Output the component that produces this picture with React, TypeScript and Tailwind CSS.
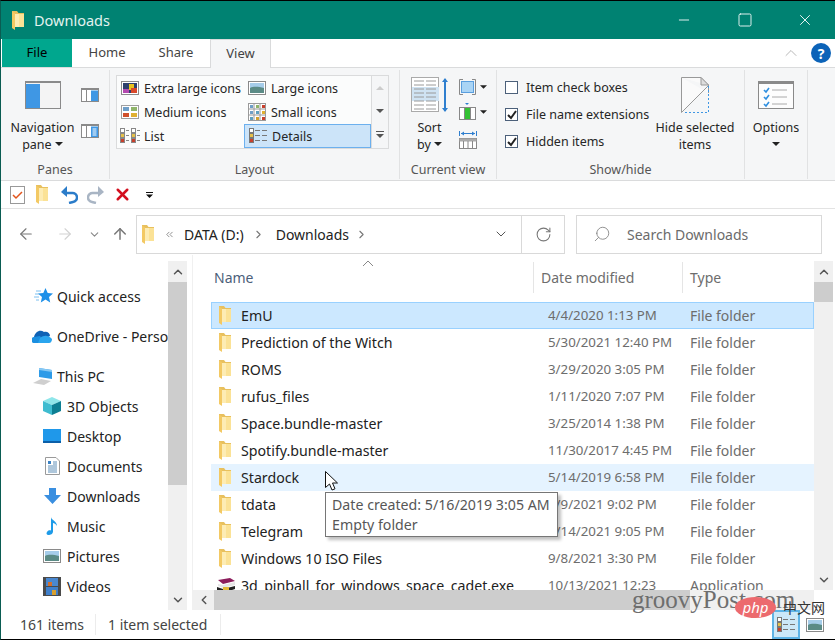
import { ArrowLeft, ArrowRight, ArrowUp, ChevronDown, ChevronLeft, ChevronRight, ChevronUp, ChevronsLeft, Minus, RotateCw, Search, Square, X } from "lucide-react";

const Folder = ({ className = "" }: { className?: string }) => (
  <svg viewBox="0 0 12 19" className={`h-[19px] w-3 shrink-0 ${className}`}>
    <path d="M0 0h5l1.500 2H12v14H0z" fill="#e8c05e" />
    <path d="M2.500 3H12v13H2.500z" fill="#fbe296" />
    <path d="M2.500 3H7v13H2.500z" fill="#fdecb4" />
    <path d="M0 .500l3 2V19l-3-2z" fill="#f3c964" />
  </svg>
);

const Caret = ({ className = "" }: { className?: string }) => (
  <svg viewBox="0 0 8 4" className={`inline-block h-1 w-2 ${className}`}>
    <path d="M0 0h8L4 4z" fill="#222" />
  </svg>
);

const Thumbs = ({ kind }: { kind: string }) => {
  if (kind === "xl")
    return (
      <svg viewBox="0 0 18 14" className="h-[14px] w-[18px]">
        <rect x=".5" y=".5" width="17" height="13" fill="#fff" stroke="#8a8a8a" />
        <rect x="2" y="2" width="14" height="10" fill="#2d3f6c" />
        <path d="M2 8h6v4H2z" fill="#b44ab0" />
        <path d="M8 3h5v6H8z" fill="#e8c11e" />
        <path d="M10 7h6v5h-6z" fill="#d8482a" />
      </svg>
    );
  if (kind === "lg")
    return (
      <svg viewBox="0 0 18 14" className="h-[14px] w-[18px]">
        <rect x=".5" y=".5" width="17" height="13" fill="#fff" stroke="#8a8a8a" />
        <rect x="2" y="2" width="14" height="5" fill="#a6cdea" />
        <path d="M2 7c4-2 9-1 14 0v5H2z" fill="#5b8b86" />
      </svg>
    );
  if (kind === "md")
    return (
      <svg viewBox="0 0 18 14" className="h-[14px] w-[18px]">
        <rect x=".5" y=".5" width="17" height="13" fill="#fff" stroke="#a0a0a0" />
        <rect x="2" y="2" width="6" height="4" fill="#6f9fc8" />
        <rect x="10" y="2" width="6" height="4" fill="#8fb56a" />
        <rect x="2" y="8" width="6" height="4" fill="#d0502c" />
        <rect x="10" y="8" width="6" height="4" fill="#e0b030" />
      </svg>
    );
  if (kind === "sm")
    return (
      <svg viewBox="0 0 18 18" className="h-[18px] w-[18px]">
        <rect x=".5" y=".5" width="17" height="17" fill="#fff" stroke="#9a9a9a" />
        <path d="M6 0v18M12 0v18M0 6h18M0 12h18" stroke="#9a9a9a" />
        <rect x="2" y="2" width="3" height="3" fill="#6f9fc8" />
        <rect x="8" y="2" width="3" height="3" fill="#8fb56a" />
        <rect x="14" y="2" width="3" height="3" fill="#c8402c" />
        <rect x="2" y="8" width="3" height="3" fill="#6f9fc8" />
        <rect x="8" y="8" width="3" height="3" fill="#5da0c0" />
        <rect x="14" y="8" width="3" height="3" fill="#e0b030" />
        <rect x="2" y="14" width="3" height="3" fill="#5da0c0" />
        <rect x="8" y="14" width="3" height="3" fill="#d0a030" />
        <rect x="14" y="14" width="3" height="3" fill="#c8402c" />
      </svg>
    );
  if (kind === "list")
    return (
      <svg viewBox="0 0 20 16" className="h-4 w-5">
        {[0, 11].map((x) => (
          <g key={x} transform={`translate(${x} 0)`}>
            <rect x=".5" y=".5" width="4" height="4" fill="#fff" stroke="#888" />
            <rect x=".5" y="5.5" width="4" height="4" fill="#e4c04a" stroke="#888" />
            <rect x=".5" y="10.5" width="4" height="4" fill="#c8402c" stroke="#888" />
            <path d="M6 2.5h3M6 7.5h3M6 12.5h3" stroke="#888" />
          </g>
        ))}
      </svg>
    );
  return (
    <svg viewBox="0 0 18 16" className="h-4 w-[18px]">
      <rect x=".5" y=".5" width="4" height="4" fill="#fff" stroke="#777" />
      <rect x=".5" y="5.5" width="4" height="4" fill="#e4c04a" stroke="#777" />
      <rect x=".5" y="10.5" width="4" height="4" fill="#c8402c" stroke="#777" />
      <path d="M6 2.5h5M13 2.5h5M6 7.5h5M13 7.5h5M6 12.5h5M13 12.5h5" stroke="#777" />
    </svg>
  );
};

const PaneIcon = ({ side }: { side: "right" | "details" }) => (
  <svg viewBox="0 0 18 14" className="h-[14px] w-[18px]">
    <rect x=".5" y=".5" width="17" height="13" fill="#fff" stroke="#8a8a8a" />
    <rect x="0" y="0" width="18" height="2" fill="#8a8a8a" />
    <path d="M5.5 2v12" stroke="#8a8a8a" />
    <rect x="10" y="2.5" width="7" height="10.5" fill="#3f97e4" />
    {side === "details" && <path d="M11.5 5h4M11.5 7h4M11.5 9h4M11.5 11h4" stroke="#fff" />}
  </svg>
);

const galleryRows = [
  [
    { kind: "xl", label: "Extra large icons" },
    { kind: "lg", label: "Large icons" },
  ],
  [
    { kind: "md", label: "Medium icons" },
    { kind: "sm", label: "Small icons" },
  ],
  [
    { kind: "list", label: "List" },
    { kind: "details", label: "Details" },
  ],
];

const files = [
  ["EmU", "4/4/2020 1:13 PM", "File folder"],
  ["Prediction of the Witch", "5/30/2021 12:40 PM", "File folder"],
  ["ROMS", "3/29/2020 3:05 PM", "File folder"],
  ["rufus_files", "1/11/2020 7:07 PM", "File folder"],
  ["Space.bundle-master", "3/25/2014 1:38 PM", "File folder"],
  ["Spotify.bundle-master", "11/30/2017 4:45 PM", "File folder"],
  ["Stardock", "5/14/2019 6:58 PM", "File folder"],
  ["tdata", "9/9/2021 9:02 PM", "File folder"],
  ["Telegram", "9/14/2021 9:05 PM", "File folder"],
  ["Windows 10 ISO Files", "9/8/2021 3:30 PM", "File folder"],
  ["3d_pinball_for_windows_space_cadet.exe", "10/13/2021 12:23", "Application"],
];

const TreeIcon = ({ name }: { name: string }) => {
  switch (name) {
    case "Quick access":
      return (
        <svg viewBox="0 0 19 16" className="h-4 w-[19px] shrink-0">
          <path d="M11.500 0l2.200 5 5.300.5-4 3.500 1.200 5.500-4.700-2.900-4.700 2.900L8 9 4 5.500 9.300 5z" fill="#1e90e8" />
          <path d="M2 3h5M1 6h4M0 9h5M2 12h3" stroke="#7cc0f0" />
        </svg>
      );
    case "OneDrive - Personal":
      return (
        <svg viewBox="0 0 20 13" className="h-[13px] w-5 shrink-0">
          <path d="M2 7C3 2 8-1 12 2c3-1 6 1 6 4l-8 4z" fill="#0f62b5" />
          <path d="M3 13a3 3 0 0 1-1-6l6-1 5 7z" fill="#1b8fe0" />
          <path d="M8 8c4-3 8-3 12 1 0 2-1 4-3 4H6z" fill="#2aa5ee" />
        </svg>
      );
    case "This PC":
      return (
        <svg viewBox="0 0 20 17" className="h-[17px] w-5 shrink-0">
          <path d="M6 0l13 2v9L6 9z" fill="#2e9be8" />
          <path d="M6 0l13 2v2L6 2z" fill="#88c9f4" />
          <path d="M0 15l8-4 10 2-7 4z" fill="#cfcfcf" />
        </svg>
      );
    case "3D Objects":
      return (
        <svg viewBox="0 0 18 18" className="h-[18px] w-[18px] shrink-0">
          <path d="M9 0l9 4-9 4-9-4z" fill="#8fe6ea" />
          <path d="M0 4l9 4v10l-9-4z" fill="#3ebcd0" />
          <path d="M18 4L9 8v10l9-4z" fill="#0d7f93" />
        </svg>
      );
    case "Desktop":
      return (
        <svg viewBox="0 0 18 14" className="h-[14px] w-[18px] shrink-0">
          <rect width="18" height="13" fill="#1f98ea" />
          <rect y="12" width="18" height="2" fill="#0b5fa8" />
        </svg>
      );
    case "Documents":
      return (
        <svg viewBox="0 0 15 18" className="h-[18px] w-[15px] shrink-0">
          <path d="M.5.500H11L14.500 4v13.500H.500z" fill="#fff" stroke="#9a9a9a" />
          <path d="M3 4h3v3H3z" fill="#3b82c4" />
          <path d="M8 5h4M8 7h4M3 9h9M3 11h9M3 13h9M3 15h9" stroke="#5e8fb8" />
        </svg>
      );
    case "Downloads":
      return (
        <svg viewBox="0 0 17 16" className="h-4 w-[17px] shrink-0">
          <path d="M5 0h7v7h5l-8.500 9L0 7h5z" fill="#3a8fe0" />
        </svg>
      );
    case "Music":
      return (
        <svg viewBox="0 0 12 18" className="h-[18px] w-3 shrink-0">
          <path d="M5 0c0 3 6 4 6 9-1-2-3-3-4-3v8.500C7 17 4.500 18 2.500 18S0 16.500 1 15s2-2 4-1.500z" fill="#1e9be8" />
        </svg>
      );
    case "Pictures":
      return <Thumbs kind="lg" />;
    default:
      return (
        <svg viewBox="0 0 18 19" className="h-[19px] w-[18px] shrink-0">
          <rect width="18" height="19" fill="#4a4a4a" />
          <rect x="3" y="1" width="12" height="8" fill="#4a88d0" />
          <rect x="3" y="10" width="12" height="8" fill="#3f80cc" />
          <path d="M5 5h4v4H5z" fill="#d07030" />
          <path d="M9 13h4v5H9z" fill="#d8a030" />
        </svg>
      );
  }
};

const tree = [
  { name: "Quick access", box: "pl-[33px] gap-[4px]" },
  { name: "OneDrive - Personal", box: "mt-[10px] pl-[31px] gap-[5px]" },
  { name: "This PC", box: "mt-[10px] pl-[32px] gap-[4px]" },
  { name: "3D Objects", box: "pl-[42px] gap-[6px]" },
  { name: "Desktop", box: "pl-[42px] gap-[6px]" },
  { name: "Documents", box: "pl-[44px] gap-[7px]" },
  { name: "Downloads", box: "pl-[43px] gap-[6px]" },
  { name: "Music", box: "pl-[45px] gap-[9px]" },
  { name: "Pictures", box: "pl-[42px] gap-[6px]" },
  { name: "Videos", box: "pl-[42px] gap-[6px]" },
];

export default function App() {
  return (
    <div className="relative flex h-[640px] w-[835px] flex-col overflow-hidden border-t border-b border-l border-t-black border-b-black border-l-[#0a5c52] bg-white font-['Noto_Sans',sans-serif] text-[13px] text-[#222]">
      {/* title bar */}
      <div className="flex h-[38px] shrink-0 items-center bg-[#008272] pl-[11px] text-white">
        <Folder />
        <span className="ml-[10px] pt-[1px] text-[14.500px] text-[#e3f2ef]">Downloads</span>
        <div className="ml-auto flex items-center pr-[21px]">
          <Minus className="mr-[45px] h-4 w-4" strokeWidth={1.300} />
          <Square className="mr-[43px] h-4 w-4" strokeWidth={1.300} />
          <X className="h-[18px] w-[18px]" strokeWidth={1.200} />
        </div>
      </div>

      {/* tabs */}
      <div className="flex h-[28px] shrink-0 items-stretch">
        <div className="ml-[1px] flex w-[70px] items-center justify-center bg-[#00a78e] text-black">File</div>
        <div className="flex w-[70px] items-center justify-center text-[#444]">Home</div>
        <div className="flex w-[68px] items-center justify-center text-[#444]">Share</div>
        <div className="z-10 -mb-px flex w-[61px] items-center justify-center border-x border-t border-[#d9dadb] bg-[#f5f6f7] text-[#444]">View</div>
        <div className="ml-auto flex items-center gap-[10px] pr-[4px]">
          <ChevronUp className="h-5 w-5 text-[#aaa]" strokeWidth={1} />
          <div className="flex h-5 w-5 items-center justify-center rounded-full bg-[#0c63b8] text-[14px] font-bold text-white">?</div>
        </div>
      </div>

      {/* ribbon */}
      <div className="flex h-[114px] shrink-0 border-y border-[#dadbdc] bg-[#f5f6f7] text-[12.500px] leading-[17px] text-[#262626]">
        <RibbonGroup label="Panes" width="w-[109px]">
          <div className="flex h-full">
            <div className="ml-[9px] flex w-[65px] flex-col items-center pt-[11px]">
              <svg viewBox="0 0 36 28" className="h-7 w-9">
                <rect x=".5" y=".5" width="35" height="27" fill="#f4f4f4" stroke="#8a8a8a" />
                <rect y="0" width="36" height="2" fill="#8a8a8a" />
                <rect x="1" y="3" width="14" height="24" fill="#3f97e4" />
              </svg>
              <div className="mt-[10px] text-center">Navigation</div>
              <div>pane <Caret className="mb-[3px]" /></div>
            </div>
            <div className="ml-[6px] flex flex-col gap-[22px] pt-[18px]">
              <PaneIcon side="right" />
              <PaneIcon side="details" />
            </div>
          </div>
        </RibbonGroup>

        <RibbonGroup label="Layout" width="w-[290px]">
          <div className="ml-[6px] mt-[5px] flex">
            <div className="w-[256px] border border-[#dadbdc] bg-[#fbfcfc]">
              {galleryRows.map((row) => (
                <div key={row[0].label} className="grid h-[24px] grid-cols-2">
                  {row.map((g) => (
                    <div
                      key={g.label}
                      className={`flex items-center ${g.kind === "details" ? "border border-[#6cb0ee] bg-[#cce4f9]" : ""}`}
                    >
                      <span className="flex w-[27px] shrink-0 justify-center pr-[2px]">
                        <Thumbs kind={g.kind} />
                      </span>
                      <span className="whitespace-nowrap">{g.label}</span>
                    </div>
                  ))}
                </div>
              ))}
            </div>
            <div className="flex w-[17px] flex-col items-center justify-between border-y border-r border-[#dadbdc] py-[10px]">
              <svg viewBox="0 0 8 4" className="h-1 w-2"><path d="M0 4h8L4 0z" fill="#ccc" /></svg>
              <svg viewBox="0 0 8 4" className="h-1 w-2"><path d="M0 0h8L4 4z" fill="#555" /></svg>
              <svg viewBox="0 0 8 7" className="h-[7px] w-2"><path d="M0 0h8v1H0zM0 3h8L4 7z" fill="#555" /></svg>
            </div>
          </div>
        </RibbonGroup>

        <RibbonGroup label="Current view" width="w-[97px]">
          <div className="flex">
            <div className="flex w-[56px] flex-col items-center pl-[3px] pt-[7px]">
              <svg viewBox="0 0 38 36" className="h-9 w-[38px]">
                <rect x=".5" y=".5" width="27" height="34" fill="#fff" stroke="#aaa" />
                <rect x="1" y="10" width="27" height="14" fill="#cfe3f3" />
                <path d="M3 4h10M15 4h10M3 8h10M15 8h10M3 12h10M15 12h10M3 16h10M15 16h10M3 20h10M15 20h10M3 24h10M15 24h10M3 28h10M15 28h10M3 32h10M15 32h10" stroke="#9a9a9a" />
                <path d="M34 2v32" stroke="#2f7fcf" strokeWidth="2" />
                <path d="M31 5l3-4 3 4zM31 31l3 4 3-4z" fill="#2f7fcf" />
              </svg>
              <div className="mt-[6px]">Sort</div>
              <div>by <Caret className="mb-[3px]" /></div>
            </div>
            <div className="ml-[3px] flex flex-col pt-[8px]">
              <div className="flex h-[17px] items-center gap-[4px]">
                <svg viewBox="0 0 17 16" className="h-4 w-[17px]">
                  <path d="M4 .500H.500v15H4M13 .500h3.500v15H13" fill="none" stroke="#888" />
                  <rect x="2.500" y="2.500" width="12" height="11" fill="#a9d4f5" stroke="#5a9ede" />
                </svg>
                <Caret className="w-[7px]" />
              </div>
              <div className="mt-[8px] flex h-[18px] items-center gap-[4px]">
                <svg viewBox="0 0 17 18" className="h-[18px] w-[17px]">
                  <path d="M6 0h4L8 2z" fill="#2f7fcf" />
                  <rect x=".5" y="4.500" width="16" height="12" fill="#fff" stroke="#888" />
                  <path d="M5.500 4v13M11.500 4v13" stroke="#888" />
                  <rect x="6" y="5" width="5" height="11" fill="#35c235" />
                </svg>
                <Caret className="w-[7px]" />
              </div>
              <div className="mt-[10px]">
                <svg viewBox="0 0 18 18" className="h-[18px] w-[18px]">
                  <path d="M.500 0v5M17.500 0v5" stroke="#2f7fcf" />
                  <path d="M2 2.500h14" stroke="#2f7fcf" />
                  <path d="M2 2.500l3-2v4zM16 2.500l-3-2v4z" fill="#2f7fcf" />
                  <rect x=".5" y="7.500" width="17" height="10" fill="#fff" stroke="#888" />
                  <rect x=".5" y="7.500" width="17" height="3" fill="#aaa" />
                  <path d="M4.500 10v8M9 10v8M13.500 10v8" stroke="#888" />
                </svg>
              </div>
            </div>
          </div>
        </RibbonGroup>

        <RibbonGroup label="Show/hide" width="w-[248px]">
          <div className="flex">
            <div className="ml-[8px] flex w-[150px] flex-col gap-[10px] pt-[9px]">
              <Check label="Item check boxes" />
              <Check label="File name extensions" checked />
              <Check label="Hidden items" checked />
            </div>
            <div className="-ml-[2px] flex w-[84px] flex-col items-center pt-[7px]">
              <svg viewBox="0 0 28 36" className="h-9 w-7">
                <path d="M.500.500H20l7.500 7.500v8M.500.500v35l27-27" fill="#fafafa" stroke="#999" />
                <path d="M20 .500V8h7.500z" fill="#ddd" stroke="#999" />
                <path d="M27.500 9v26.500H2" fill="none" stroke="#3f97e4" strokeDasharray="2 2" />
              </svg>
              <div className="mt-[6px] whitespace-nowrap text-center">Hide selected</div>
              <div>items</div>
            </div>
          </div>
        </RibbonGroup>

        <RibbonGroup label="" width="w-[63px]">
          <div className="flex flex-col items-center pt-[11px]">
            <svg viewBox="0 0 36 28" className="h-7 w-9">
              <rect x=".5" y=".5" width="35" height="27" fill="#fdfdfd" stroke="#8a8a8a" />
              <rect width="36" height="3" fill="#8a8a8a" />
              <path d="M6 9l2 2 3-4M6 16l2 2 3-4M6 23l2 2 3-4" fill="none" stroke="#2f8fe0" strokeWidth="1.600" />
              <path d="M14 9h15M14 16h15M14 23h15" stroke="#aaa" />
            </svg>
            <div className="mt-[10px]">Options</div>
            <Caret className="mt-[6px]" />
          </div>
        </RibbonGroup>
      </div>

      {/* quick access toolbar */}
      <div className="flex h-[28px] shrink-0 items-center border-b border-[#e3e3e3] pl-[9px]">
        <svg viewBox="0 0 15 18" className="h-[18px] w-[15px]">
          <rect x=".5" y=".5" width="14" height="17" fill="#fff" stroke="#999" />
          <path d="M3 9l3 3 6-6" fill="none" stroke="#e2541c" strokeWidth="1.500" />
        </svg>
        <Folder className="ml-[11px]" />
        <svg viewBox="0 0 17 18" className="ml-[13px] h-[18px] w-[17px]">
          <path d="M5 7h6a4.500 4.500 0 0 1 1 9l-4 1" fill="none" stroke="#2b7cc9" strokeWidth="2.500" />
          <path d="M0 6l6-6v11z" fill="#2b7cc9" />
        </svg>
        <svg viewBox="0 0 17 18" className="ml-[9px] h-[18px] w-[17px]">
          <path d="M12 7H6a4.500 4.500 0 0 0-1 9l4 1" fill="none" stroke="#a9b5c4" strokeWidth="2.500" />
          <path d="M17 6l-6-6v11z" fill="#a9b5c4" />
        </svg>
        <X className="ml-[9px] h-[19px] w-[19px] text-[#d3101f]" strokeWidth={3.200} />
        <svg viewBox="0 0 7 6" className="ml-[14px] h-[6px] w-[7px]">
          <path d="M0 0h7v1H0zM0 2.500h7L3.500 6z" fill="#111" />
        </svg>
      </div>

      {/* nav bar */}
      <div className="flex h-[46px] shrink-0 items-center pt-[4px]">
        <ArrowLeft className="ml-[16px] h-[18px] w-[18px] text-[#777]" strokeWidth={1.500} />
        <ArrowRight className="ml-[21px] h-[18px] w-[18px] text-[#d2d2d2]" strokeWidth={1.500} />
        <ChevronDown className="ml-[14px] h-[13px] w-[13px] text-[#888]" strokeWidth={2} />
        <ArrowUp className="ml-[10px] h-[18px] w-[18px] text-[#777]" strokeWidth={2} />
        <div className="ml-[7px] flex h-[39px] w-[429px] items-center border border-[#d9d9d9] pl-[5px] text-[14px]">
          <Folder />
          <ChevronsLeft className="ml-[10px] h-[11px] w-[11px] text-[#888]" />
          <span className="ml-[9px]">DATA (D:)</span>
          <ChevronRight className="ml-[8px] h-[13px] w-[13px] text-[#777]" />
          <span className="ml-[11px]">Downloads</span>
          <ChevronRight className="ml-[6px] h-[13px] w-[13px] text-[#777]" />
          <ChevronDown className="ml-[125px] h-4 w-4 text-[#555]" strokeWidth={1.500} />
          <div className="ml-[12px] flex h-full flex-1 items-center justify-center border-l border-[#d9d9d9]">
            <RotateCw className="h-[17px] w-[17px] text-[#777]" strokeWidth={1.500} />
          </div>
        </div>
        <div className="ml-[11px] flex h-[39px] w-[246px] items-center border border-[#d9d9d9] pl-[16px] text-[14px] text-[#6b6b6b]">
          <Search className="h-[18px] w-[18px] -scale-x-100 text-[#888]" strokeWidth={1.200} />
          <span className="ml-[16px]">Search Downloads</span>
        </div>
      </div>

      {/* main */}
      <div className="flex min-h-0 flex-1 text-[14px]">
        <div className="flex w-[187px] shrink-0">
          <div className="w-[167px] overflow-hidden pt-[26px]">
            {tree.map((t) => (
              <div key={t.name} className={`flex h-[30px] items-center whitespace-nowrap ${t.box}`}>
                <TreeIcon name={t.name} />
                <span>{t.name}</span>
              </div>
            ))}
          </div>
          <div className="mt-[6px] flex w-[19px] flex-col bg-[#f0f0f0]">
            <div className="flex h-[21px] items-center justify-center">
              <ChevronUp className="h-[14px] w-[14px] text-[#555]" strokeWidth={2.500} />
            </div>
            <div className="h-[203px] bg-[#cdcdcd]" />
            <div className="mt-auto flex h-[21px] items-center justify-center">
              <ChevronDown className="h-[14px] w-[14px] text-[#555]" strokeWidth={2.500} />
            </div>
          </div>
        </div>

        <div className="ml-[4px] flex min-w-0 flex-1 border-l border-[#f0f0f0]">
          <div className="flex w-[621px] shrink-0 flex-col">
            <div className="relative flex h-[47px] shrink-0 pt-[6px] pl-[21px] text-[#4c607a]">
              <svg viewBox="0 0 10 5" className="absolute left-[170px] top-[6px] h-[5px] w-[10px]">
                <path d="M0 5l5-5 5 5" fill="none" stroke="#888" />
              </svg>
              <div className="mt-[1px] flex h-[31px] w-[320px] items-center border-r border-[#e5e5e5]">Name</div>
              <div className="mt-[1px] flex h-[31px] w-[149px] items-center border-r border-[#e5e5e5] pl-[7px] text-[#6d6d6d]">Date modified</div>
              <div className="mt-[1px] flex h-[31px] items-center pl-[7px] text-[#6d6d6d]">Type</div>
            </div>
            <div className="min-h-0 flex-1 overflow-hidden pl-[18px]">
              {files.map((f, i) => (
                <div
                  key={f[0]}
                  className={`flex h-[27px] items-center border whitespace-nowrap ${
                    i === 0 ? "border-[#99d1ff] bg-[#cce8ff]" : i === 6 ? "border-[#e5f3ff] bg-[#e5f3ff]" : "border-transparent"
                  }`}
                >
                  <span className="flex w-[29px] shrink-0 pl-[7px]">
                    {i === 10 ? (
                      <svg viewBox="0 0 20 16" className="-ml-[3px] h-4 w-5 shrink-0">
                        <path d="M2 2l12-2 5 3-12 3z" fill="#8c1d5c" />
                        <path d="M2 6l5 1 12-3v3L7 10 2 8z" fill="#e6e6e6" />
                        <path d="M1 9l6 2 12-3v3L7 15l-6-2z" fill="#222" />
                        <rect x="7" y="9" width="6" height="6" fill="#e2b83a" />
                      </svg>
                    ) : (
                      <Folder />
                    )}
                  </span>
                  <span className="w-[307px] shrink-0 text-[14.200px]">{f[0]}</span>
                  <span className="w-[142px] shrink-0 text-[13.300px] text-[#6d6d6d]">{f[1]}</span>
                  <span className="text-[#6d6d6d]">{f[2]}</span>
                </div>
              ))}
            </div>
            <div className="flex h-[20px] shrink-0 bg-[#f0f0f0]">
              <div className="flex w-[21px] items-center justify-center">
                <ChevronLeft className="h-[14px] w-[14px] text-[#555]" strokeWidth={2.500} />
              </div>
              <div className="w-[476px] bg-[#cdcdcd]" />
            </div>
          </div>
          <div className="mt-[6px] mb-[20px] flex w-[19px] shrink-0 flex-col bg-[#f0f0f0]">
            <div className="flex h-[21px] items-center justify-center">
              <ChevronUp className="h-[14px] w-[14px] text-[#555]" strokeWidth={2.500} />
            </div>
            <div className="h-[20px] bg-[#cdcdcd]" />
            <div className="mt-auto flex h-[21px] items-center justify-center">
              <ChevronDown className="h-[14px] w-[14px] text-[#555]" strokeWidth={2.500} />
            </div>
          </div>
        </div>
      </div>

      {/* status bar */}
      <div className="flex h-[29px] shrink-0 items-center pl-[19px] text-[14px] text-[#444]">
        <span className="w-[76px] border-r border-[#ececec]">161 items</span>
        <span className="ml-[12px] w-[113px] border-r border-[#ececec] whitespace-nowrap">1 item selected</span>
        <div className="ml-auto mr-[11px] flex items-center">
          <div className="flex h-[29px] w-[28px] items-center justify-center border-2 border-[#5fb4e6] bg-[#cce8f8]">
            <Thumbs kind="details" />
          </div>
          <span className="ml-[6px] flex"><Thumbs kind="lg" /></span>
        </div>
      </div>

      {/* tooltip */}
      <div className="absolute left-[324px] top-[491px] flex h-[45px] w-[233px] flex-col justify-center border border-[#767676] bg-white pl-[6px] text-[14.200px] leading-[20px] text-[#575757] shadow-[3px_3px_3px_rgba(0,0,0,0.25)]">
        <div className="whitespace-nowrap">Date created: 5/16/2019 3:05 AM</div>
        <div>Empty folder</div>
      </div>

      {/* mouse pointer */}
      <svg viewBox="0 0 13 21" className="absolute left-[324px] top-[470px] h-[21px] w-[13px]">
        <path d="M.500.500v16l4-3.500 2.500 6 3-1.200-2.500-5.800h5z" fill="#fff" stroke="#111" />
      </svg>

      {/* watermark */}
      <div className="pointer-events-none absolute left-[631px] top-[580px] font-['Liberation_Serif',serif] text-[25px] text-[#6e6e6e]">groovyPost.com</div>
      <div className="absolute left-[734px] top-[596px] flex h-[21px] w-[41px] items-center justify-center rounded-[50%] bg-[#ec6a6e] text-[15px] italic text-white">php</div>
      <div className="absolute left-[782px] top-[596px] font-['Noto_Sans_CJK_SC',sans-serif] text-[14px] text-[#333]">中文网</div>
    </div>
  );
}

function RibbonGroup({ label, width, children }: { label: string; width: string; children: React.ReactNode }) {
  return (
    <div className={`relative mt-[2px] mb-[1px] flex shrink-0 flex-col border-r border-[#e1e2e3] ${width}`}>
      <div className="min-h-0 flex-1">{children}</div>
      {label && <div className="h-[19px] text-center text-[12.500px] leading-[19px] text-[#555]">{label}</div>}
    </div>
  );
}

function Check({ label, checked }: { label: string; checked?: boolean }) {
  return (
    <div className="flex h-[17px] items-center whitespace-nowrap">
      <span className="flex h-[13px] w-[13px] shrink-0 items-center justify-center border border-[#4c607a] bg-white">
        {checked && (
          <svg viewBox="0 0 10 10" className="h-[10px] w-[10px]">
            <path d="M1 5l3 3 5-7" fill="none" stroke="#222" strokeWidth="2" />
          </svg>
        )}
      </span>
      <span className="ml-[8px]">{label}</span>
    </div>
  );
}
